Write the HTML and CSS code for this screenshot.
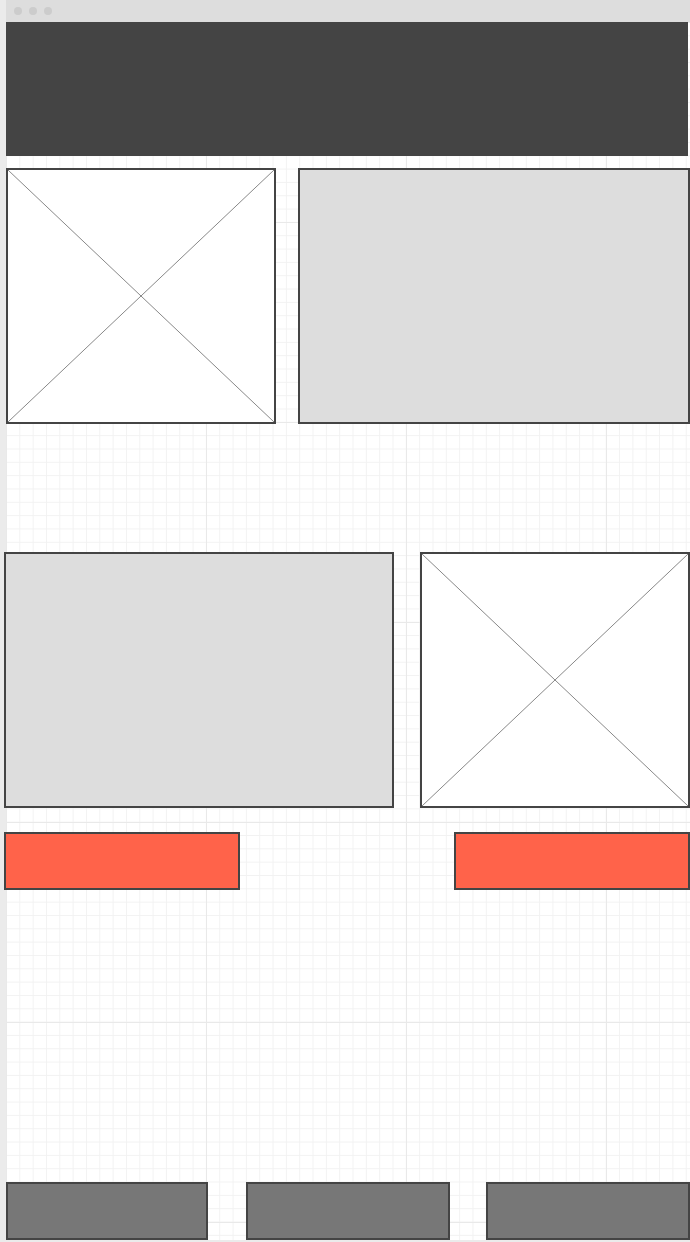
FILE: index.html
```html
<!DOCTYPE html>
<html lang="en">
<head>
    <meta charset="UTF-8">
    <meta name="viewport" content="width=device-width, initial-scale=1.0">
    <title>Wireframe</title>
    <link rel="stylesheet" href="styles.css">
</head>
<body>
    <div class="window">
        <div class="titlebar">
            <span class="dot"></span>
            <span class="dot"></span>
            <span class="dot"></span>
        </div>

        <div class="canvas">
            <div class="header"></div>

            <div class="row row-top">
                <div class="box image-box">
                    <svg viewBox="0 0 100 100" preserveAspectRatio="none">
                        <line x1="0" y1="0" x2="100" y2="100" vector-effect="non-scaling-stroke"/>
                        <line x1="100" y1="0" x2="0" y2="100" vector-effect="non-scaling-stroke"/>
                    </svg>
                </div>
                <div class="box text-box wide"></div>
            </div>

            <div class="row row-middle">
                <div class="box text-box wide shift-left"></div>
                <div class="box image-box">
                    <svg viewBox="0 0 100 100" preserveAspectRatio="none">
                        <line x1="0" y1="0" x2="100" y2="100" vector-effect="non-scaling-stroke"/>
                        <line x1="100" y1="0" x2="0" y2="100" vector-effect="non-scaling-stroke"/>
                    </svg>
                </div>
            </div>

            <div class="row row-buttons">
                <div class="btn btn-accent shift-left"></div>
                <div class="btn btn-accent"></div>
            </div>

            <div class="row row-footer">
                <div class="btn btn-dark first"></div>
                <div class="btn btn-dark middle"></div>
                <div class="btn btn-dark last"></div>
            </div>
        </div>
    </div>
</body>
</html>
```

FILE: styles.css
```css
:root {
    --frame: #ebebeb;
    --bar: #dddddd;
    --ink: #444444;
    --fill: #dddddd;
    --accent: #ff634a;
    --dark: #777777;
}

* {
    margin: 0;
    padding: 0;
    box-sizing: border-box;
}

body {
    background-color: var(--frame);
    width: 690px;
    height: 1242px;
    overflow: hidden;
}

.window {
    margin-left: 6px;
    width: 684px;
}

.titlebar {
    height: 22px;
    background: var(--bar);
    display: flex;
    align-items: center;
    gap: 7px;
    padding-left: 8px;
}

.dot {
    width: 8px;
    height: 8px;
    border-radius: 50%;
    background: #cccccc;
}

.canvas {
    height: 1218px;
    background-color: #ffffff;
    background-image:
        linear-gradient(to right, #e9e9e9 1px, transparent 1px),
        linear-gradient(to bottom, #e9e9e9 1px, transparent 1px),
        linear-gradient(to right, #f2f2f2 1px, transparent 1px),
        linear-gradient(to bottom, #f2f2f2 1px, transparent 1px);
    background-size: 200px 200px, 200px 200px, 13.333px 13.333px, 13.333px 13.333px;
}

.header {
    width: 682px;
    height: 134px;
    background: var(--ink);
}

.row {
    display: flex;
    justify-content: space-between;
}

.row-top {
    margin-top: 12px;
}

.row-middle {
    margin-top: 128px;
}

.row-buttons {
    margin-top: 24px;
}

.row-footer {
    margin-top: 292px;
    justify-content: flex-start;
}

.box {
    height: 256px;
    border: 2px solid var(--ink);
}

.image-box {
    width: 270px;
    background: #ffffff;
}

.image-box svg {
    display: block;
    width: 100%;
    height: 100%;
}

.image-box line {
    stroke: #888888;
    stroke-width: 1;
}

.text-box {
    background: var(--fill);
}

.wide {
    width: 392px;
}

.row-middle .wide {
    width: 390px;
}

.shift-left {
    margin-left: -2px;
}

.btn {
    height: 58px;
    border: 2px solid var(--ink);
}

.btn-accent {
    width: 236px;
    background: var(--accent);
}

.btn-dark {
    width: 204px;
    background: var(--dark);
}

.btn-dark.first {
    width: 202px;
}

.btn-dark.middle {
    margin-left: 38px;
}

.btn-dark.last {
    margin-left: 36px;
}
```
